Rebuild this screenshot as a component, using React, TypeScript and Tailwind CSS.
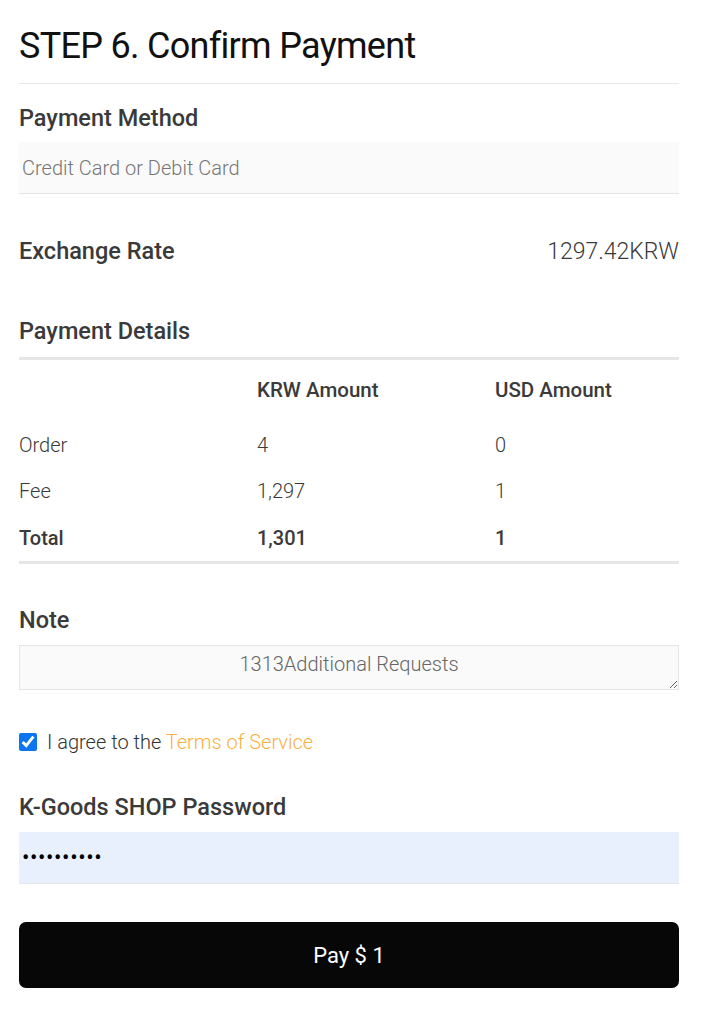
import { useState } from "react";

export default function App() {
  const [agree, setAgree] = useState(true);
  const [note, setNote] = useState("1313Additional Requests");
  const [password, setPassword] = useState("kgoods1234");

  const rows = [
    { label: "Order", krw: "4", usd: "0", bold: false },
    { label: "Fee", krw: "1,297", usd: "1", bold: false },
    { label: "Total", krw: "1,301", usd: "1", bold: true },
  ];

  return (
    <div className="min-h-screen bg-white font-['Roboto','Liberation_Sans',sans-serif]">
      <div className="ml-[19px] w-[660px] pt-[25px] pb-[23px]">
        {/* Title */}
        <h1 className="text-[36px] leading-[42px] font-normal tracking-[-0.7px] text-[#111111]">STEP 6. Confirm Payment</h1>
        <div className="mt-[16px] h-px bg-[#e8e8e8]" />

        {/* Payment method */}
        <h2 className="mt-[21px] text-[23.5px] leading-[26px] font-medium text-[#3a3a3a]">Payment Method</h2>
        <input
          readOnly
          placeholder="Credit Card or Debit Card"
          className="mt-[11px] block h-[52px] w-full border-b border-[#e5e5e5] bg-[#fafafa] pl-[3px] text-[20px] font-light text-[#555] placeholder:text-[#757575] outline-none"
        />

        {/* Exchange rate */}
        <div className="mt-[44px] flex h-[26px] items-baseline justify-between">
          <span className="text-[23.5px] leading-[26px] font-medium text-[#3a3a3a]">Exchange Rate</span>
          <span className="text-[23px] leading-[26px] font-light text-[#3a3a3a]">1297.42KRW</span>
        </div>

        {/* Payment details */}
        <h2 className="mt-[54px] text-[23.5px] leading-[26px] font-medium text-[#3a3a3a]">Payment Details</h2>
        <div className="mt-[13px] h-[3px] bg-[#e6e6e6]" />
        <div className="grid grid-cols-[238px_238px_1fr] text-[20px] text-[#3a3a3a]">
          <div className="flex h-[61px] items-center" />
          <div className="flex h-[61px] items-center text-[20.5px] font-medium">KRW Amount</div>
          <div className="flex h-[61px] items-center text-[20.5px] font-medium">USD Amount</div>
          {rows.map((r, i) => (
            <div key={r.label} className="contents">
              <div className={`flex items-center ${i === 1 ? "h-[46px]" : "h-[47px]"} ${r.bold ? "font-medium" : "font-light"}`}>{r.label}</div>
              <div className={`flex items-center ${i === 1 ? "h-[46px]" : "h-[47px]"} ${r.bold ? "font-medium" : "font-light"}`}>{r.krw}</div>
              <div className={`flex items-center ${i === 1 ? "h-[46px]" : "h-[47px]"} ${r.bold ? "font-medium" : "font-light"}`}>{r.usd}</div>
            </div>
          ))}
        </div>
        <div className="h-[3px] bg-[#e6e6e6]" />

        {/* Note */}
        <h2 className="mt-[43px] text-[23.5px] leading-[26px] font-medium text-[#3a3a3a]">Note</h2>
        <textarea
          value={note}
          onChange={(e) => setNote(e.target.value)}
          className="mt-[12px] block h-[45px] w-full border border-[#e5e5e5] bg-[#fafafa] pt-[6px] text-center text-[20px] leading-[24px] font-light text-[#666] outline-none"
        />

        {/* Agreement */}
        <label className="mt-[40px] flex h-[24px] items-center gap-[10px] text-[20px] font-light text-[#333]">
          <input
            type="checkbox"
            checked={agree}
            onChange={(e) => setAgree(e.target.checked)}
            className="m-0 h-[18px] w-[18px] accent-[#0b76ef]"
          />
          <span>
            I agree to the <a className="text-[#fbb040]">Terms of Service</a>
          </span>
        </label>

        {/* Password */}
        <h2 className="mt-[40px] text-[23.5px] leading-[26px] font-medium text-[#3a3a3a]">K-Goods SHOP Password</h2>
        <input
          type="password"
          value={password}
          onChange={(e) => setPassword(e.target.value)}
          className="mt-[12px] block h-[52px] w-full border-b border-[#e2e5ea] bg-[#e8f0fe] pl-[3px] text-[22px] tracking-[0.6px] text-black outline-none"
        />

        <button className="mt-[38px] flex h-[66px] w-full items-center justify-center rounded-[7px] bg-[#070707] text-[22px] font-normal text-white">
          Pay $ 1
        </button>
      </div>
    </div>
  );
}
